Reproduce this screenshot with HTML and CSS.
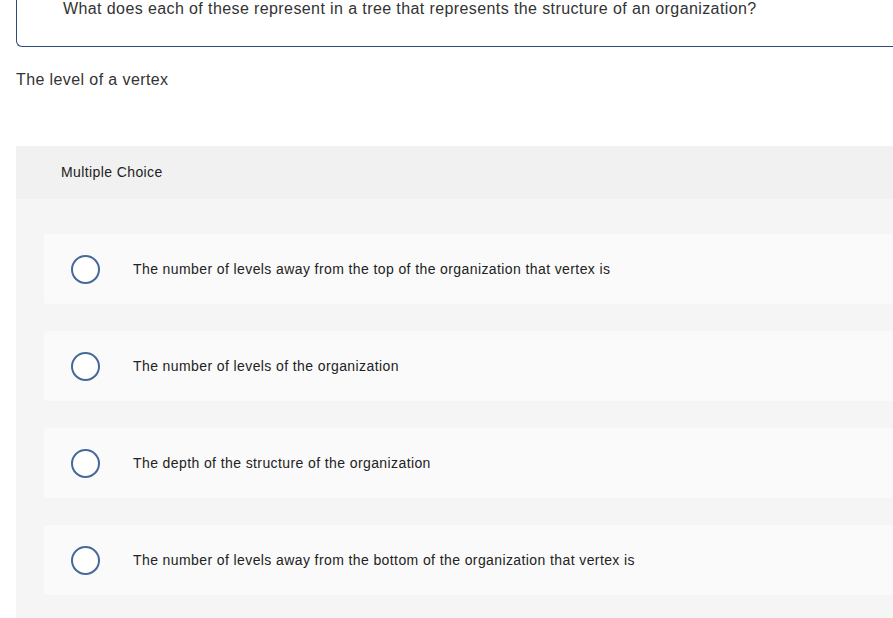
FILE: index.html
```html
<!DOCTYPE html>
<html lang="en">
<head>
  <meta charset="UTF-8" />
  <title>Multiple Choice</title>
  <link rel="stylesheet" href="styles.css">
</head>
<body>

<div class="pregunta">
  <p>What does each of these represent in a tree that represents the structure of an organization?</p>
</div>

<p class="enunciado">The level of a vertex</p>

<section class="panel">
  <div class="panel-head">Multiple Choice</div>
  <div class="panel-body">
    <label class="opcion">
      <span class="radio"></span>
      <span class="texto">The number of levels away from the top of the organization that vertex is</span>
    </label>
    <label class="opcion">
      <span class="radio"></span>
      <span class="texto">The number of levels of the organization</span>
    </label>
    <label class="opcion">
      <span class="radio"></span>
      <span class="texto">The depth of the structure of the organization</span>
    </label>
    <label class="opcion">
      <span class="radio"></span>
      <span class="texto">The number of levels away from the bottom of the organization that vertex is</span>
    </label>
  </div>
</section>

</body>
</html>
```

FILE: styles.css
```css
* {
  box-sizing: border-box;
}

body {
  font-family: "Liberation Sans", Arial, sans-serif;
  letter-spacing: 0.025em;
  margin: 0;
  padding: 0;
  background: white;
  color: #333;
  overflow: hidden;
}

.pregunta {
  margin: -1px 0 0 16px;
  padding: 0 0 27px 46px;
  border: 1px solid #2d4d77;
  border-top: none;
  border-right: none;
  border-bottom-left-radius: 6px;
}

.pregunta p {
  margin: 0;
  font-size: 16px;
  line-height: 20px;
}

.enunciado {
  margin: 0;
  padding: 23px 0 0 16px;
  font-size: 16px;
  line-height: 20px;
}

.panel {
  margin: 56px 0 0 16px;
  background: #f5f5f5;
}

.panel-head {
  background: #f1f1f1;
  height: 53px;
  padding-left: 45px;
  font-size: 14px;
  line-height: 52px;
  color: #222;
}

.panel-body {
  padding: 35px 0 23px 28px;
  display: flex;
  flex-direction: column;
  gap: 27px;
}

.opcion {
  display: flex;
  align-items: center;
  height: 70px;
  padding-left: 27px;
  background: #fafafa;
  border-radius: 3px 0 0 3px;
}

.radio {
  width: 29px;
  height: 29px;
  border: 2px solid #45699a;
  border-radius: 50%;
  background: white;
  flex: none;
}

.texto {
  margin-left: 33px;
  font-size: 14px;
  color: #222;
}
```
